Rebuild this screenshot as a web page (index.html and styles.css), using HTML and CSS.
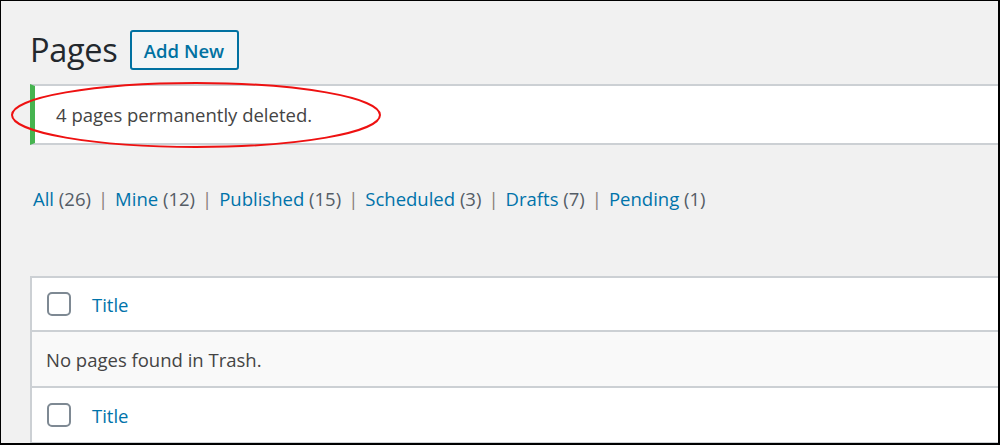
FILE: index.html
```html
<!DOCTYPE html>
<html>
<head>
<meta charset="utf-8">
<link rel="stylesheet" href="styles.css">
</head>
<body>
<div class="frame">
  <div class="wrap">
    <div class="head">
      <h1 class="title">Pages</h1>
      <a class="btn">Add New</a>
    </div>
    <div class="notice-area">
      <div class="notice"><p>4 pages permanently deleted.</p></div>
      <svg class="ring" width="372" height="70" viewBox="0 0 372 70"><ellipse cx="186" cy="35" rx="184" ry="32" fill="none" stroke="#ee1111" stroke-width="2"/></svg>
    </div>
    <ul class="subsub">
      <li><a>All</a> <span class="count">(26)</span></li>
      <li class="sep">|</li>
      <li><a>Mine</a> <span class="count">(12)</span></li>
      <li class="sep">|</li>
      <li><a>Published</a> <span class="count">(15)</span></li>
      <li class="sep">|</li>
      <li><a>Scheduled</a> <span class="count">(3)</span></li>
      <li class="sep">|</li>
      <li><a>Drafts</a> <span class="count">(7)</span></li>
      <li class="sep">|</li>
      <li><a>Pending</a> <span class="count">(1)</span></li>
    </ul>
    <div class="table">
      <div class="row head-row"><span class="cb"></span><a class="col">Title</a></div>
      <div class="row empty">No pages found in Trash.</div>
      <div class="row foot-row"><span class="cb"></span><a class="col">Title</a></div>
    </div>
  </div>
</div>
</body>
</html>
```

FILE: styles.css
```css
* { box-sizing: border-box; }
html, body { margin: 0; padding: 0; }
body {
  width: 1000px;
  height: 445px;
  overflow: hidden;
  font-family: "Open Sans", "Noto Sans", sans-serif;
  color: #444;
}
.frame {
  width: 1000px;
  height: 445px;
  border-style: solid;
  border-color: #000;
  border-width: 1px 2px 2px 1px;
  background: #f1f1f1;
  overflow: hidden;
}
.wrap {
  padding-left: 29px;
  width: 1040px;
}
.head {
  display: flex;
  align-items: center;
  gap: 12px;
  padding-top: 29px;
  height: 69px;
}
.title {
  margin: 0;
  font-weight: 400;
  font-size: 32.5px;
  line-height: 40px;
  color: #23282d;
  letter-spacing: -0.3px;
}
.btn {
  display: flex;
  align-items: center;
  justify-content: center;
  width: 109px;
  height: 40px;
  border: 2px solid #0071a1;
  border-radius: 3px;
  background: #f3f5f6;
  color: #0071a1;
  font-weight: 600;
  font-size: 18.5px;
}
.notice-area {
  position: relative;
  margin-top: 14px;
}
.notice {
  height: 61px;
  background: #fff;
  border-top: 2px solid #ccd0d4;
  border-bottom: 2px solid #ccd0d4;
  border-left: 5px solid #46b450;
  display: flex;
  align-items: center;
  padding-left: 21px;
}
.notice p {
  margin: 0;
  font-size: 18.5px;
  color: #444;
}
.ring {
  position: absolute;
  left: -20px;
  top: -4px;
}
.subsub {
  list-style: none;
  margin: 0;
  padding: 0 0 0 3px;
  display: flex;
  gap: 7px;
  height: 131px;
  padding-top: 42px;
  font-size: 18.5px;
  line-height: 24px;
}
.subsub a { color: #0073aa; }
.count { color: #555d66; }
.sep { color: #8a7f7a; }
.table {
  background: #fff;
  border: 2px solid #ccd0d4;
}
.row {
  display: flex;
  align-items: center;
  height: 54px;
  padding-left: 15px;
  font-size: 18.5px;
}
.head-row { border-bottom: 2px solid #ccd0d4; height: 54px; }
.empty { background: #f9f9f9; border-bottom: 2px solid #ccd0d4; height: 56px; color: #444; padding-left: 14px; }
.cb {
  width: 24px;
  height: 24px;
  border: 2px solid #7e8993;
  border-radius: 5px;
  background: #fff;
  margin-right: 21px;
}
.col { color: #0073aa; }
```
